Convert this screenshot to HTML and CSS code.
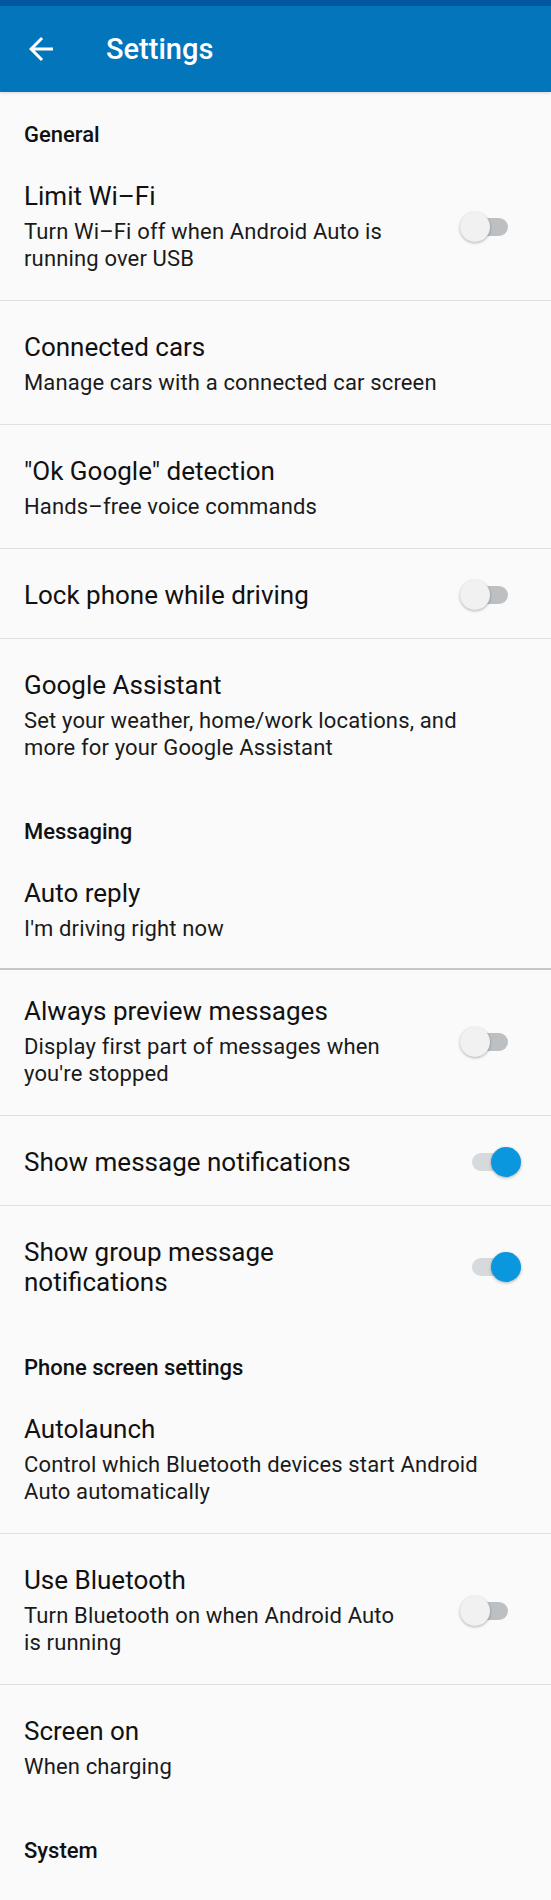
FILE: index.html
```html
<!DOCTYPE html>
<html lang="en">
<head>
    <meta charset="UTF-8">
    <meta name="viewport" content="width=device-width, initial-scale=1.0">
    <title>Settings</title>
    <link rel="stylesheet" href="styles.css">
</head>
<body>
    <header class="appbar">
        <button class="back" aria-label="Back">
            <svg viewBox="0 0 24 24" width="36" height="36"><path d="M20 11H7.83l5.59-5.59L12 4l-8 8 8 8 1.41-1.41L7.83 13H20v-2z" fill="#fff"/></svg>
        </button>
        <h1>Settings</h1>
    </header>

    <main class="prefs">
        <h2 class="category">General</h2>

        <div class="pref divided">
            <div class="pref-text">
                <div class="pref-title">Limit Wi–Fi</div>
                <div class="pref-summary">Turn Wi–Fi off when Android Auto is running over USB</div>
            </div>
            <span class="switch"><span class="track"></span><span class="thumb"></span></span>
        </div>

        <div class="pref divided">
            <div class="pref-text">
                <div class="pref-title">Connected cars</div>
                <div class="pref-summary">Manage cars with a connected car screen</div>
            </div>
        </div>

        <div class="pref divided">
            <div class="pref-text">
                <div class="pref-title">"Ok Google" detection</div>
                <div class="pref-summary">Hands–free voice commands</div>
            </div>
        </div>

        <div class="pref divided">
            <div class="pref-text">
                <div class="pref-title">Lock phone while driving</div>
            </div>
            <span class="switch"><span class="track"></span><span class="thumb"></span></span>
        </div>

        <div class="pref">
            <div class="pref-text">
                <div class="pref-title">Google Assistant</div>
                <div class="pref-summary">Set your weather, home/work locations, and more for your Google Assistant</div>
            </div>
        </div>

        <h2 class="category">Messaging</h2>

        <div class="pref seam">
            <div class="pref-text">
                <div class="pref-title">Auto reply</div>
                <div class="pref-summary">I'm driving right now</div>
            </div>
        </div>

        <div class="pref divided after-seam">
            <div class="pref-text">
                <div class="pref-title">Always preview messages</div>
                <div class="pref-summary">Display first part of messages when you're stopped</div>
            </div>
            <span class="switch"><span class="track"></span><span class="thumb"></span></span>
        </div>

        <div class="pref divided">
            <div class="pref-text">
                <div class="pref-title">Show message notifications</div>
            </div>
            <span class="switch on"><span class="track"></span><span class="thumb"></span></span>
        </div>

        <div class="pref">
            <div class="pref-text">
                <div class="pref-title">Show group message notifications</div>
            </div>
            <span class="switch on"><span class="track"></span><span class="thumb"></span></span>
        </div>

        <h2 class="category">Phone screen settings</h2>

        <div class="pref divided">
            <div class="pref-text">
                <div class="pref-title">Autolaunch</div>
                <div class="pref-summary">Control which Bluetooth devices start Android Auto automatically</div>
            </div>
        </div>

        <div class="pref divided">
            <div class="pref-text">
                <div class="pref-title">Use Bluetooth</div>
                <div class="pref-summary">Turn Bluetooth on when Android Auto is running</div>
            </div>
            <span class="switch"><span class="track"></span><span class="thumb"></span></span>
        </div>

        <div class="pref">
            <div class="pref-text">
                <div class="pref-title">Screen on</div>
                <div class="pref-summary">When charging</div>
            </div>
        </div>

        <h2 class="category">System</h2>
    </main>
</body>
</html>
```

FILE: styles.css
```css
body {
    margin: 0;
    background-color: #fafafa;
    font-family: Roboto, "Noto Sans", sans-serif;
    color: #111;
}

.appbar {
    display: flex;
    align-items: center;
    height: 86px;
    border-top: 6px solid #01589f;
    background-color: #0275bb;
    padding-left: 23px;
    box-shadow: 0 1px 3px rgba(0,0,0,0.15);
}

.back {
    display: flex;
    padding: 0;
    border: none;
    background: none;
}

.appbar h1 {
    margin: 0 0 0 47px;
    font-size: 29px;
    font-weight: 500;
    color: white;
}

.category {
    margin: 0;
    padding: 31px 24px 3px;
    font-size: 22px;
    line-height: 24px;
    font-weight: 500;
    color: #111;
}

.pref {
    display: flex;
    align-items: center;
    padding: 31px 30px 28px 24px;
}

.pref.divided {
    border-bottom: 1px solid #e0e0e0;
}

.pref.seam {
    padding-bottom: 26px;
    border-bottom: 2px solid #c5c8ca;
}

.pref.after-seam {
    padding-top: 26px;
}

.pref-text {
    flex: 1;
    padding-right: 36px;
}

.pref-title {
    font-size: 26px;
    line-height: 30px;
}

.pref-summary {
    margin-top: 7px;
    font-size: 22px;
    line-height: 27px;
    letter-spacing: 0.15px;
    color: #1a1a1a;
}

.switch {
    position: relative;
    flex: none;
    width: 61px;
    height: 30px;
    margin-left: 19px;
}

.switch .track {
    position: absolute;
    left: 12px;
    right: 13px;
    top: 6px;
    height: 18px;
    border-radius: 9px;
    background-color: #bcc0c2;
}

.switch .thumb {
    position: absolute;
    left: 0;
    top: 0;
    width: 30px;
    height: 30px;
    border-radius: 50%;
    background-color: #f1f1f1;
    box-shadow: 0 1px 3px rgba(0,0,0,0.3);
}

.switch.on .track {
    background-color: #d6dadc;
}

.switch.on .thumb {
    left: auto;
    right: 0;
    background-color: #0b97dd;
}
```
